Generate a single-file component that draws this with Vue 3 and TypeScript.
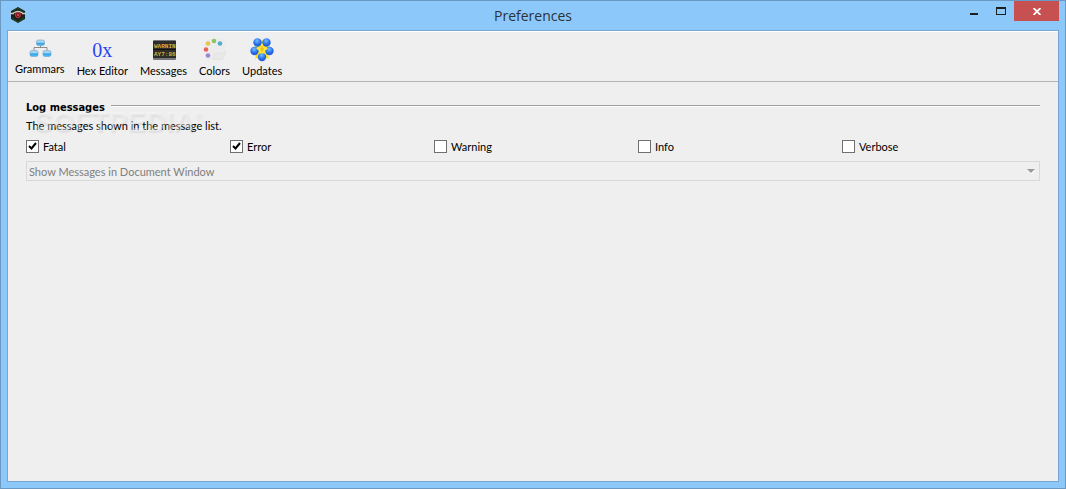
<script setup lang="ts">
import { ref } from 'vue'

interface LogLevel {
  id: string
  label: string
  checked: boolean
}

const levels = ref<LogLevel[]>([
  { id: 'fatal', label: 'Fatal', checked: true },
  { id: 'error', label: 'Error', checked: true },
  { id: 'warning', label: 'Warning', checked: false },
  { id: 'info', label: 'Info', checked: false },
  { id: 'verbose', label: 'Verbose', checked: false },
])

const petals = [
  { x: 7.5, y: 4.5 },
  { x: 16.5, y: 4.5 },
  { x: 4.5, y: 13 },
  { x: 19.5, y: 13 },
  { x: 12, y: 19 },
]

const paints = [
  { x: 5, y: 17.5, fill: '#9a86d6' },
  { x: 3, y: 11.5, fill: '#ee625c' },
  { x: 5, y: 5.5, fill: '#e9c24c' },
  { x: 11, y: 3, fill: '#8fc463' },
  { x: 17, y: 5.5, fill: '#4faed0' },
]
</script>

<template>
  <div class="window">
    <header class="titlebar">
      <svg class="app-icon" width="16" height="16" viewBox="0 0 16 16" aria-hidden="true">
        <path d="M8 0 15 4V12L8 16 1 12V4Z" fill="#17251b" />
        <path d="M2 5 8 1 14 5M2 11 8 15 14 11" fill="none" stroke="#244a2b" />
        <path d="M0 6Q8 2 16 6L13 9Q8 13 3 9Z" fill="#2b1a1a" />
        <path d="M0 6.500H4M12 6.500H16M3.500 6Q8 3 12.500 6" fill="none" stroke="#c9d3cc" stroke-width="1.4" />
        <circle cx="8" cy="8" r="2.6" fill="#7d1420" stroke="#b73a44" />
        <circle cx="8" cy="8" r="1" fill="#e05a62" />
      </svg>
      <h1 class="title">Preferences</h1>
      <div class="controls">
        <button class="control minimize" type="button" aria-label="Minimize">
          <svg width="8" height="2" viewBox="0 0 8 2"><path d="M0 0H8V2H0Z" fill="#1e1e1e" /></svg>
        </button>
        <button class="control maximize" type="button" aria-label="Maximize">
          <svg width="10" height="8" viewBox="0 0 10 8"><path d="M0 0H10V8H0ZM1 2V7H9V2Z" fill="#1e1e1e" fill-rule="evenodd" /></svg>
        </button>
        <button class="control close" type="button" aria-label="Close">
          <svg width="8" height="7" viewBox="0 0 8 7"><path d="M.5 0 7.500 7M7.500 0 .5 7" stroke="#fff" stroke-width="1.800" /></svg>
        </button>
      </div>
    </header>

    <main class="client">
      <nav class="toolbar" aria-label="Preference pages">
        <button class="tool short" type="button">
          <svg width="24" height="22" viewBox="0 0 24 22" aria-hidden="true">
            <defs>
              <linearGradient id="node" x2="0" y2="1">
                <stop offset="0" stop-color="#b9dcf2" />
                <stop offset=".45" stop-color="#8fd0f5" />
                <stop offset=".55" stop-color="#2a9be6" />
                <stop offset="1" stop-color="#5cc6fa" />
              </linearGradient>
            </defs>
            <path d="M12.500 7V9.500M6 12V9.500H19V12" fill="none" stroke="#8c8c8c" />
            <g fill="url(#node)" stroke="#6f9fc4" stroke-width=".6">
              <rect x="8.500" y="2" width="8" height="5.500" rx="1.800" />
              <rect x="2" y="12.500" width="8" height="6" rx="1.800" />
              <rect x="15" y="12.500" width="8" height="6" rx="1.800" />
            </g>
          </svg>
          <span>Grammars</span>
        </button>
        <button class="tool" type="button">
          <span class="hex" aria-hidden="true">0x</span>
          <span>Hex Editor</span>
        </button>
        <button class="tool" type="button">
          <svg width="24" height="24" viewBox="0 0 24 24" aria-hidden="true">
            <rect x="1" y="2" width="23" height="20" rx="1" fill="#77787a" />
            <rect x="1" y="3" width="23" height="17" fill="#2d2c29" />
            <path d="M1 11.500H24" stroke="#111" />
            <g class="display">
              <text x="2" y="10">WARNIN</text>
              <text x="2" y="18">AY7:86</text>
            </g>
          </svg>
          <span>Messages</span>
        </button>
        <button class="tool" type="button">
          <svg width="24" height="24" viewBox="0 0 24 24" aria-hidden="true">
            <path d="M3 1H21Q23 6 23 14Q19 11 15 15Q11 17 7 22H3Q0 13 1 4Z" fill="#ececec" />
            <path d="M9 21Q12 14 16 15Q19 16 22 13Q23 18 19 22Z" fill="#e8e8e8" stroke="#e0e0e0" stroke-width=".7" />
            <circle v-for="p in paints" :key="p.fill" :cx="p.x" :cy="p.y" r="2.300" :fill="p.fill" />
          </svg>
          <span>Colors</span>
        </button>
        <button class="tool" type="button">
          <svg width="24" height="24" viewBox="0 0 24 24" aria-hidden="true">
            <defs>
              <radialGradient id="petal" cx=".45" cy=".3">
                <stop offset="0" stop-color="#7dbcff" />
                <stop offset=".6" stop-color="#3a86f6" />
                <stop offset="1" stop-color="#2463dc" />
              </radialGradient>
            </defs>
            <path d="M12 1 15 8 22 9 17 13 19 21 12 18 5 21 7 13 2 9 9 8Z" fill="#ffdf13" />
            <circle v-for="(p, i) in petals" :key="i" :cx="p.x" :cy="p.y" r="4.200" fill="url(#petal)" />
            <path d="M12 5 13.500 8.500 18 10.500 15 12.500 14.500 15.500H9.500L9 12.500 6 10.500 10.500 8.500Z" fill="#ffe63a" />
            <path d="M12 8V14M10 11H14" stroke="#f0ad11" />
          </svg>
          <span>Updates</span>
        </button>
      </nav>

      <section class="page">
        <div class="heading">
          <h2>Log messages</h2>
          <span class="rule"></span>
        </div>
        <p class="hint">The messages shown in the message list.</p>
        <div class="watermark" aria-hidden="true">SOFTPEDIA<sup>®</sup></div>
        <div class="levels">
          <label v-for="level in levels" :key="level.id" class="level" :for="level.id">
            <input :id="level.id" v-model="level.checked" type="checkbox" />
            <span>{{ level.label }}</span>
          </label>
        </div>
        <div class="chooser">
          <select aria-label="Message display" disabled>
            <option>Show Messages in Document Window</option>
          </select>
          <svg class="arrow" width="8" height="5" viewBox="0 0 8 5" aria-hidden="true">
            <path d="M1 1H8L4.500 5Z" fill="#fff" />
            <path d="M0 0H8L4 4Z" fill="#999" />
          </svg>
        </div>
      </section>
    </main>
  </div>
</template>

<style>
body {
  margin: 0;
}
</style>

<style scoped>
.window {
  box-sizing: border-box;
  min-height: 100vh;
  display: flex;
  flex-direction: column;
  padding: 0 6px 6px;
  border: 1px solid #6b99c4;
  background: #8dc8fa;
  color: #000;
  font: 11px/14px Lato, sans-serif;
}

button {
  border: 0;
  padding: 0;
  background: none;
  color: inherit;
  font: inherit;
}

.titlebar {
  display: grid;
  grid-template-columns: 1fr auto 1fr;
  height: 29px;
}

.app-icon {
  margin: 6px 0 0 3px;
}

.title {
  margin: 0;
  color: #2b3238;
  font: 14px/29px "Open Sans", sans-serif;
}

.controls {
  display: flex;
  justify-content: flex-end;
  height: 20px;
}

.control {
  display: flex;
  align-items: center;
  justify-content: center;
  width: 27px;
}

.minimize {
  padding-top: 5px;
}

.close {
  width: 45px;
  background: #c75050;
}

.client {
  flex: 1;
  border: 1px solid #78a6d1;
  background: #efefef;
}

.toolbar {
  display: flex;
  gap: 12px;
  height: 49px;
  padding: 0 7px;
  border-top: 1px solid #fff;
  border-bottom: 1px solid #b4b4b4;
}

.tool {
  display: flex;
  flex-direction: column;
  align-items: center;
  justify-content: flex-start;
  padding-top: 6px;
  gap: 2px;
  white-space: nowrap;
}

.tool.short {
  padding-top: 6px;
}

.hex {
  height: 24px;
  color: #2c46f0;
  font: 20px/24px "Liberation Serif", serif;
}

.display {
  fill: #d9ae3d;
  font: bold 6px "Liberation Mono", monospace;
}

.page {
  position: relative;
  padding: 18px;
}

.heading {
  display: flex;
  gap: 6px;
}

h2 {
  margin: 0;
  font: bold 11px/16px "DejaVu Sans Condensed", sans-serif;
}

.rule {
  flex: 1;
  height: 1px;
  margin-top: 5px;
  border-bottom: 1px solid #fff;
  background: #a0a0a0;
}

.hint {
  margin: 3px 0 7px;
}

.watermark {
  position: absolute;
  top: 24px;
  left: 26px;
  color: rgba(250, 250, 250, 0.4);
  font: bold 28px/32px "Liberation Sans", sans-serif;
  text-shadow: 1px 2px 2px rgba(0, 0, 0, 0.07);
  pointer-events: none;
}

.watermark sup {
  font-size: 10px;
  line-height: 10px;
  vertical-align: 12px;
}

.levels {
  display: grid;
  grid-template-columns: repeat(5, 1fr);
  gap: 6px;
}

.level {
  display: flex;
  align-items: flex-start;
  gap: 4px;
}

.level input {
  appearance: none;
  box-sizing: border-box;
  width: 13px;
  height: 13px;
  margin: 0;
  border: 1px solid #707070;
  background: #fff;
}

.level input:checked {
  background: #fff url("data:image/svg+xml,%3Csvg xmlns='http://www.w3.org/2000/svg' viewBox='0 0 11 11'%3E%3Cpath d='M2 5 4.500 7.500 9 2' fill='none' stroke='%23000' stroke-width='2'/%3E%3C/svg%3E");
}

.chooser {
  position: relative;
  margin-top: 7px;
}

select {
  appearance: none;
  display: block;
  box-sizing: border-box;
  width: 100%;
  height: 20px;
  padding: 1px 18px 0 2px;
  border: 1px solid #d9d9d9;
  border-radius: 0;
  background: #efefef;
  color: #808080;
  font: inherit;
  opacity: 1;
}

.arrow {
  position: absolute;
  top: 8px;
  right: 5px;
  pointer-events: none;
}
</style>
